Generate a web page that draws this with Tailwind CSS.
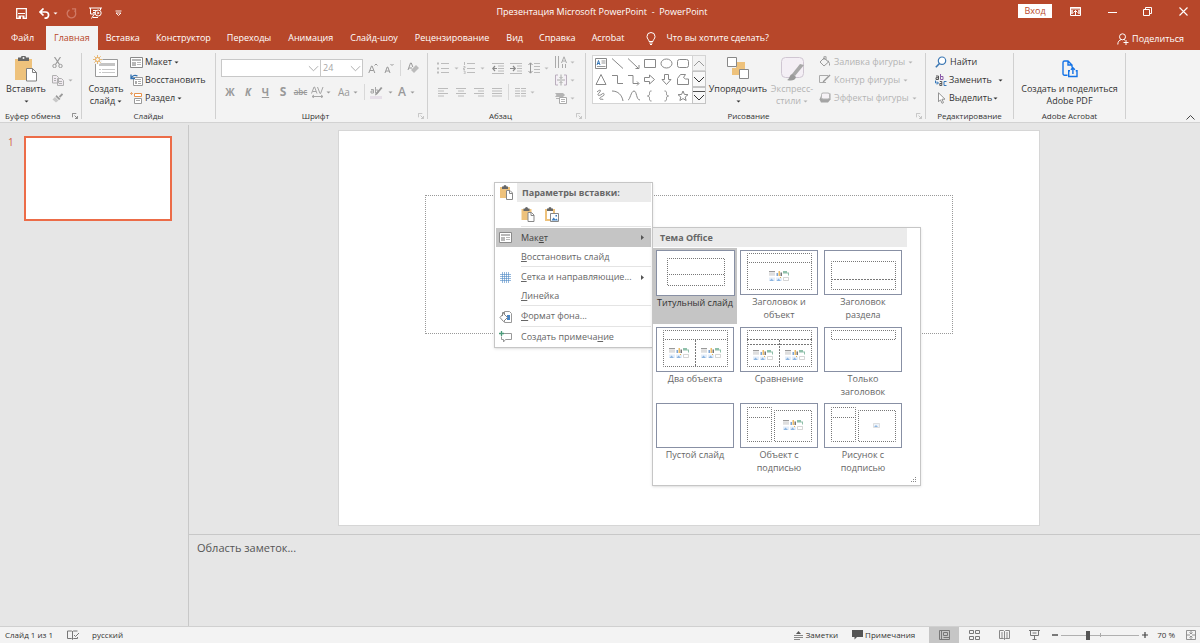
<!DOCTYPE html>
<html lang="ru">
    <head>
        <meta charset="utf-8">
        <title>Презентация Microsoft PowerPoint - PowerPoint</title>
        <script src="https://cdn.jsdelivr.net/npm/@tailwindcss/browser@4"></script>
    </head>

    <body class="h-screen flex flex-col overflow-hidden bg-[#e6e6e6] font-['Open_Sans',sans-serif] text-[9px] leading-[12px] text-[#333]">

        <!-- icon sprites -->
        <svg class="hidden">
            <symbol id="caret" viewBox="0 0 5 3"><path d="M.5 .5h4l-2 2z" fill="currentColor"/></symbol>
            <symbol id="chevron" viewBox="0 0 12 7"><path d="M1 1l5 5 5-5" fill="none" stroke="currentColor"/></symbol>
            <symbol id="launcher" viewBox="0 0 7 7"><path d="M.5 5V.5H5M3 3l3 3M6.500 3.500v3h-3" fill="none" stroke="currentColor"/></symbol>
            <symbol id="paste" viewBox="0 0 24 26">
                <path d="M1 3h17v21H1z" fill="#eec27c"/><path d="M4 1.500h3a2.500 2 0 015 0h3V5H4z" fill="#666"/><circle cx="9.500" cy="2" r="1" fill="#f3f3f3"/>
                <path d="M12.500 12.500h6l4 4V25h-10z" fill="#fff" stroke="#808080"/><path d="M18.500 12.500v4h4" fill="none" stroke="#808080"/>
            </symbol>
            <symbol id="paste-small" viewBox="0 0 13 15">
                <path d="M0 2h10v11H0z" fill="#eec27c"/><path d="M2 1.500h1.500a1.500 1.500 0 013 0H8V4H2z" fill="#666"/>
                <path d="M6.500 5.500h3.500l2.500 2.500v6.500h-6z" fill="#fff" stroke="#888"/><path d="M9.500 5.500v3h3" fill="none" stroke="#888"/>
            </symbol>
            <symbol id="paste-pic" viewBox="0 0 14 15">
                <path d="M1 3h8v10H1z" fill="#fff" stroke="#eec27c" stroke-width="2"/><path d="M2 1.500h1.500a1.500 1.500 0 013 0H8V4H2z" fill="#666"/>
                <path d="M5.500 6.500h8v8h-8z" fill="#fff" stroke="#888"/><path d="M6.500 13.500l2-3 2 2 1-1 1.500 2z" fill="#3f7fbf"/><path d="M10.500 8h1.500v1.500h-1.500z" fill="#3f7fbf"/>
            </symbol>
            <symbol id="layout" viewBox="0 0 13 11">
                <path d="M.5 .5h12v10H.5z" fill="#fff" stroke="#8a8a8a"/><path d="M2 2h9v2H2zM2 5h4v4H2zM7 5h4v1H7zM7 7h4v1H7z" fill="#b8b8b8"/>
            </symbol>
            <!-- tiny set of content placeholders inside a layout preview -->
            <symbol id="content" viewBox="0 0 20 10">
                <path d="M0 0h6v5H0z" fill="#e6e6e6"/><path d="M0 0h6v1H0z" fill="#999"/><path d="M0 3h6" stroke="#c4c4c4" stroke-width=".5"/>
                <path d="M7.500 2h1.500v3H7.500z" fill="#7ba3d4"/><path d="M9.500 0H11v5H9.500z" fill="#ecbc66"/><path d="M11.500 1.500H13v3.500h-1.500z" fill="#777"/>
                <path d="M14 0h4v1.500h2v3h-1V2.500h-5z" fill="#8fc0aa"/>
                <path d="M0 6.500h6V10H0zM7 6.500h6V10H7z" fill="#e4eefa"/><path d="M.5 10l2-2.500 2.500 2.500zM7.500 10l2-2.500 2.500 2.500z" fill="#8db5e0"/>
                <path d="M14.500 6.500h5v3h-5z" fill="#fff" stroke="#bbb" stroke-width=".6"/><path d="M11 6h1v1h-1z" fill="#e8b04c"/>
            </symbol>
            <symbol id="slide-new" viewBox="0 0 26 23">
                <path d="M2.500 4.500h22v17h-22z" fill="#fff" stroke="#999"/><path d="M6 8h16v3H6z" fill="#c4c4c4"/><path d="M6 14.500h2M9 14.500h13M6 17.500h2M9 17.500h13" stroke="#c8c8c8"/>
                <circle cx="4.500" cy="4.500" r="5" fill="#f3f3f3"/><path d="M4.500 0v9M0 4.500h9M1.300 1.300l6.400 6.400M7.700 1.300l-6.400 6.400" stroke="#e8b874"/><circle cx="4.500" cy="4.500" r="2" fill="#f3f3f3" stroke="#e8a851"/>
            </symbol>
        </svg>

        <!-- title bar -->
        <header class="bg-[#b7472a] text-white">
            <div class="flex h-[26px] items-center">
                <div class="flex flex-1 items-center pl-4">
                    <button type="button" aria-label="Сохранить"><svg class="size-[11px]" viewBox="0 0 11 11"><path d="M.7 .7h9.600v9.600H.7z" fill="none" stroke="#fff" stroke-width="1.300"/><path d="M2 5.500h7" stroke="#fff"/><path d="M2.500 7.500h6V11h-6z" fill="#fff"/><path d="M5 8.500h1.500V11H5z" fill="#b7472a"/></svg></button>
                    <button type="button" aria-label="Отменить" class="ml-3 flex items-center gap-[3px]"><svg class="h-[11px] w-[11px]" viewBox="0 0 11 11"><path d="M4.500 .5L1 4l3.500 3.500M1 4h5.500a3 3 0 010 6.200H5.500" fill="none" stroke="#fff" stroke-width="1.700"/></svg><svg class="h-[3px] w-[5px]"><use href="#caret"/></svg></button>
                    <button type="button" aria-label="Повторить" disabled class="ml-2 text-[#d07a66]"><svg class="size-[11px]" viewBox="0 0 11 11"><path d="M3.500 1.800a4.300 4.300 0 105 .8M6 .8h3.500v3.400" fill="none" stroke="currentColor" stroke-width="1.300"/></svg></button>
                    <button type="button" aria-label="С начала" class="ml-3"><svg class="h-3 w-[13px]" viewBox="0 0 13 12"><path d="M0 1h13M1.500 1v6h5M11.500 1v2M4 3.500h3M4 5.500h2M5 7.500l-2.500 4M4 10.500h5" fill="none" stroke="#fff"/><circle cx="9.200" cy="6" r="3" fill="none" stroke="#fff"/><path d="M8.400 4.500l2.300 1.500-2.300 1.500z" fill="#fff"/></svg></button>
                    <button type="button" aria-label="Настройка панели" class="ml-[13px]"><svg class="size-[7px]" viewBox="0 0 7 7"><path d="M.5 1h6M1 3h5L3.500 5.500z" fill="none" stroke="#fff" stroke-width=".9"/></svg></button>
                </div>
                <h1 class="whitespace-pre pb-[3px]">Презентация Microsoft PowerPoint  -  PowerPoint</h1>
                <div class="flex flex-1 items-center justify-end pr-3 pb-1">
                    <button type="button" class="h-[14px] w-[34px] bg-white text-[#b7472a]">Вход</button>
                    <button type="button" aria-label="Параметры ленты" class="ml-[18px]"><svg class="h-[9px] w-[11px]" viewBox="0 0 11 9"><path d="M.5 .5h10v8H.5z" fill="none" stroke="#fff"/><path d="M0 0h11v2.500H0zM1 3h2v4H1zM8 3h2v4H8z" fill="#fff" fill-opacity=".7"/><path d="M5.500 8V3.500M3.500 5.500l2-2 2 2" fill="none" stroke="#fff"/></svg></button>
                    <button type="button" aria-label="Свернуть" class="ml-[27px]"><svg class="h-[9px] w-[9px]" viewBox="0 0 9 9"><path d="M0 5.500h9" stroke="#fff"/></svg></button>
                    <button type="button" aria-label="Восстановить окно" class="ml-[26px]"><svg class="size-[9px]" viewBox="0 0 9 9"><path d="M.5 2.500h6v6h-6zM2.500 2V.5h6v6H7" fill="none" stroke="#fff"/></svg></button>
                    <button type="button" aria-label="Закрыть" class="ml-[27px]"><svg class="size-[9px]" viewBox="0 0 9 9"><path d="M.5 .5l8 8M8.500 .5l-8 8" stroke="#fff" stroke-width="1.100"/></svg></button>
                </div>
            </div>

            <!-- ribbon tabs -->
            <nav class="flex h-6 items-stretch">
                <a href="#" class="flex w-[46px] items-center pl-[11px]">Файл</a>
                <a href="#" class="flex items-center bg-[#f3f3f3] px-2 text-[#b7472a]">Главная</a>
                <a href="#" class="flex items-center px-2">Вставка</a>
                <a href="#" class="flex items-center px-2">Конструктор</a>
                <a href="#" class="flex items-center px-2">Переходы</a>
                <a href="#" class="flex items-center pr-2 pl-[9px]">Анимация</a>
                <a href="#" class="flex items-center pr-2 pl-[9px]">Слайд-шоу</a>
                <a href="#" class="flex items-center pr-2 pl-[9px]">Рецензирование</a>
                <a href="#" class="flex items-center pr-2 pl-[9px]">Вид</a>
                <a href="#" class="flex items-center px-2">Справка</a>
                <a href="#" class="flex items-center px-2">Acrobat</a>
                <button type="button" class="ml-[14px] flex items-center gap-[10px]"><svg class="h-[13px] w-[10px]" viewBox="0 0 10 13"><path d="M3 9.500C3 7.500 1 7 1 4.500a4 4 0 018 0C9 7 7 7.500 7 9.500zM3.300 11h3.400M4 12.500h2" fill="none" stroke="#fff"/></svg>Что вы хотите сделать?</button>
                <button type="button" class="ml-auto flex items-center gap-[3px] pt-[2px] pr-4"><svg class="size-3" viewBox="0 0 12 12"><circle cx="5.500" cy="3.800" r="3" fill="none" stroke="#fff"/><path d="M.8 11.500c0-3 1.500-4.300 3.400-4.900M7 6.600l1 .5M9 7v5M6.500 9.500h5" fill="none" stroke="#fff"/></svg>Поделиться</button>
            </nav>
        </header>

        <!-- ribbon -->
        <div class="flex h-[73px] shrink-0 border-b border-[#d2d2d2] bg-[#f3f3f3] pt-[3px]">

            <section class="mb-[3px] flex w-[82px] shrink-0 flex-col border-r border-[#d0d0d0]">
                <div class="flex h-[54px] shrink-0">
                    <button type="button" class="flex w-[52px] flex-col items-center pt-[3px]"><svg class="h-[26px] w-6"><use href="#paste"/></svg><span class="mt-[1px]">Вставить</span><svg class="mt-[5px] h-[3px] w-[5px]"><use href="#caret"/></svg></button>
                    <div class="flex flex-col text-[#b0b0b0]">
                        <button type="button" aria-label="Вырезать" class="flex h-[18px] items-center"><svg class="size-[11px]" viewBox="0 0 11 11"><path d="M2.500 0l5 7.500M8.500 0l-5 7.500" stroke="#999" stroke-width="1.200"/><circle cx="2.500" cy="9" r="1.700" fill="none" stroke="#999"/><circle cx="8.500" cy="9" r="1.700" fill="none" stroke="#999"/></svg></button>
                        <button type="button" aria-label="Копировать" class="flex h-[18px] items-center gap-[4px]"><svg class="h-[11px] w-[12px]" viewBox="0 0 12 11"><path d="M.5 .5h4l2 2v5.500h-6zM5.500 3.500h4l2 2v5h-6z" fill="#f0eaf0" stroke="currentColor"/><path d="M2 3.500h2M2 5.500h2M7 6.500h3M7 8.500h3" stroke="currentColor"/></svg><svg class="h-[3px] w-[5px]"><use href="#caret"/></svg></button>
                        <button type="button" aria-label="Формат по образцу" class="flex h-[18px] items-center"><svg class="h-[10px] w-[11px]" viewBox="0 0 11 10"><path d="M10.500 1L7.500 4" stroke="#999" stroke-width="1.800"/><path d="M4.500 2l4 4-1.500 1-3.500-3.500z" fill="#999"/><path d="M3 4L.5 6.500 4 9.500 6.500 7.500z" fill="#c8c8c8"/></svg></button>
                    </div>
                </div>
                <div class="flex items-center justify-between pt-[3px] pr-[3px] pl-[5px] text-[8px]"><span class="whitespace-nowrap">Буфер обмена</span><svg class="size-[6px] text-[#777]"><use href="#launcher"/></svg></div>
            </section>

            <section class="mb-[3px] flex w-[134px] shrink-0 flex-col border-r border-[#d0d0d0]">
                <div class="flex h-[54px] shrink-0">
                    <button type="button" class="flex w-[48px] flex-col items-center pt-[2px]"><svg class="h-[23px] w-[26px]"><use href="#slide-new"/></svg><span class="mt-[5px]">Создать</span><span class="flex items-center gap-[2px]">слайд <svg class="h-[3px] w-[5px]"><use href="#caret"/></svg></span></button>
                    <div class="flex flex-col">
                        <button type="button" class="flex h-[18px] items-center gap-[2px]"><svg class="h-[11px] w-[13px]"><use href="#layout"/></svg>Макет<svg class="h-[3px] w-[5px]"><use href="#caret"/></svg></button>
                        <button type="button" class="flex h-[18px] items-center gap-[2px]"><svg class="h-[12px] w-[13px]" viewBox="0 0 13 12"><path d="M3.500 3.500h9v8h-9z" fill="#fff" stroke="#999"/><path d="M5 5h6v1H5zM5 7h2v3H5zM8 7h3v1H8zM8 9h3v1H8z" fill="#aaa"/><path d="M1 .5v4h4M1.500 4c1-2.500 3.500-3.500 6-2" fill="none" stroke="#2f6fb0" stroke-width="1.300"/></svg>Восстановить</button>
                        <button type="button" class="flex h-[18px] items-center gap-[2px]"><svg class="h-[12px] w-[13px]" viewBox="0 0 13 12"><path d="M4.500 1.500h7v3h-7z" fill="#fff" stroke="#e8924b"/><path d="M4.500 6.500h7v5h-7z" fill="#fff" stroke="#999"/><path d="M6 8.500h4" stroke="#aaa"/><path d="M1.500 0v3M0 1.500h3" stroke="#e8a871"/></svg>Раздел<svg class="h-[3px] w-[5px]"><use href="#caret"/></svg></button>
                    </div>
                </div>
                <div class="pt-[3px] text-center text-[8px]">Слайды</div>
            </section>

            <section class="mb-[3px] flex w-[212px] shrink-0 flex-col border-r border-[#d0d0d0]">
                <div class="flex h-[54px] shrink-0 flex-col pl-[5px] text-[#a6a6a6]">
                    <div class="mt-[6px] flex h-[18px] items-center">
                        <div class="relative"><select aria-label="Шрифт" class="block h-[18px] w-[100px] appearance-none border border-[#c8c8c8] bg-white"><option></option></select><svg class="pointer-events-none absolute top-[6px] right-[2px] h-[7px] w-[11px]"><use href="#chevron"/></svg></div>
                        <div class="relative"><select aria-label="Размер шрифта" class="block h-[18px] w-[42px] appearance-none border border-l-0 border-[#c8c8c8] bg-white pl-[2px]"><option>24</option></select><svg class="pointer-events-none absolute top-[6px] right-[2px] h-[7px] w-[11px]"><use href="#chevron"/></svg></div>
                        <button type="button" aria-label="Увеличить размер" class="ml-[2px] flex w-4 justify-center"><svg class="h-[12px] w-[10px]" viewBox="0 0 10 12"><path d="M.8 11l2.700-7h.6L6.800 11M2 8.500h3.600M6.500 3.500L8 2l1.500 1.500" fill="none" stroke="#999"/></svg></button>
                        <button type="button" aria-label="Уменьшить размер" class="flex w-4 justify-center"><svg class="h-[12px] w-[10px]" viewBox="0 0 10 12"><path d="M1 11l2.200-6h.6L6 11M2 9h3M6.500 2L8 3.500 9.500 2" fill="none" stroke="#999"/></svg></button>
                        <span class="ml-[3px] h-4 border-l border-[#d8d8d8]"></span>
                        <button type="button" aria-label="Очистить формат" class="ml-[6px]"><svg class="h-[12px] w-[13px]" viewBox="0 0 13 12"><path d="M1 8l2.500-7h.8l1.500 4M2 6h3" fill="none" stroke="#999"/><path d="M9 3l3 3-5 5-3-3z" fill="#bbb"/></svg></button>
                    </div>
                    <div class="mt-[6px] flex h-[18px] items-center text-[10px] text-[#999]">
                        <button type="button" class="w-[18px] font-bold">Ж</button>
                        <button type="button" class="w-[18px] font-bold italic">К</button>
                        <button type="button" class="w-[17px] font-bold underline">Ч</button>
                        <button type="button" class="w-[18px] text-[12px] font-bold">S</button>
                        <button type="button" class="w-[17px] text-[8px] font-semibold line-through">abc</button>
                        <button type="button" aria-label="Интервал между знаками" class="ml-[2px] flex w-[24px] items-center gap-[2px]"><svg class="h-[12px] w-[13px]" viewBox="0 0 13 12"><path d="M.5 7.500L3 1h.6L6 7.500M1.500 5.500h3.500M6.500 1L9 7.500h.6L12 1M1 10.500h11M3 9l-2 1.500 2 1.500M10 9l2 1.500-2 1.500" fill="none" stroke="#a6a6a6"/></svg><svg class="h-[3px] w-[5px]"><use href="#caret"/></svg></button>
                        <button type="button" class="ml-[3px] flex items-center gap-[3px]">Aa<svg class="h-[3px] w-[5px]"><use href="#caret"/></svg></button>
                        <span class="ml-[6px] h-4 border-l border-[#d8d8d8]"></span>
                        <button type="button" aria-label="Цвет выделения" class="ml-[5px] flex items-center gap-[5px]"><svg class="h-[13px] w-[13px]" viewBox="0 0 13 13"><path d="M0 10h12v3H0z" fill="#e6dfe8"/><path d="M1 3.500h2.500V7H1V5h2.500M5.500 1v6H8V4H5.500" fill="none" stroke="#a6a6a6"/><path d="M12.500 2L7 8.500l-2 1 .5-2L11 1z" fill="#999"/></svg><svg class="h-[3px] w-[5px]"><use href="#caret"/></svg></button>
                        <button type="button" class="ml-[5px] flex items-center gap-[4px] text-[12px] font-semibold">A<svg class="h-[3px] w-[5px]"><use href="#caret"/></svg></button>
                    </div>
                </div>
                <div class="flex items-center pt-[3px] pr-[3px] text-[8px]"><span class="flex-1 pr-[3px] text-center">Шрифт</span><svg class="size-[6px] text-[#bbb]"><use href="#launcher"/></svg></div>
            </section>

            <section class="mb-[3px] flex w-[158px] shrink-0 flex-col border-r border-[#d0d0d0]">
                <div class="flex h-[54px] shrink-0 pl-[9px] text-[#bcbcbc]">
                    <div class="w-[118px]">
                        <div class="mt-[6px] flex h-[18px] items-center">
                            <button type="button" aria-label="Маркеры" class="flex items-center gap-[5px]"><svg class="h-[12px] w-[12px]" viewBox="0 0 12 12"><path d="M4 1.500h8M4 6.500h8M4 10.500h8" stroke="currentColor"/><path d="M0 .5h2v2H0zM0 5.500h2v2H0zM0 9.500h2v2H0z" fill="currentColor"/></svg><svg class="h-[3px] w-[5px]"><use href="#caret"/></svg></button>
                            <button type="button" aria-label="Нумерация" class="ml-1 flex items-center gap-[5px]"><svg class="h-[12px] w-[12px]" viewBox="0 0 12 12"><path d="M4 1.500h8M4 6.500h8M4 10.500h8M1.500 0v3M.5 4.500h1.500V6H.5v1.500H2M.5 9h1.500v3H.5" fill="none" stroke="currentColor"/></svg><svg class="h-[3px] w-[5px]"><use href="#caret"/></svg></button>
                            <button type="button" aria-label="Уменьшить отступ" class="ml-[7px]"><svg class="h-[11px] w-[12px]" viewBox="0 0 12 11"><path d="M0 .5h12M6 3h6M6 5.500h6M6 8h6M0 10.500h12" stroke="currentColor"/><path d="M5 5.500H.8M3 3L.8 5.500 3 8" fill="none" stroke="#8a8a8a" stroke-width="1.200"/></svg></button>
                            <button type="button" aria-label="Увеличить отступ" class="ml-[6px]"><svg class="h-[11px] w-[12px]" viewBox="0 0 12 11"><path d="M0 .5h12M7 3h5M7 5.500h5M7 8h5M0 10.500h12" stroke="currentColor"/><path d="M0 5.500h5M3 3l2.300 2.500L3 8" fill="none" stroke="#8a8a8a" stroke-width="1.200"/></svg></button>
                            <button type="button" aria-label="Интервал" class="ml-[6px] flex items-center gap-[4px]"><svg class="h-[12px] w-[12px]" viewBox="0 0 12 12"><path d="M6 1.500h6M6 4.500h6M6 7.500h6M6 10.500h6" stroke="currentColor"/><path d="M2.500 1v10M.5 3l2-2.200 2 2.200M.5 9l2 2.200 2-2.200" fill="none" stroke="#999"/></svg><svg class="h-[3px] w-[5px]"><use href="#caret"/></svg></button>
                        </div>
                        <div class="mt-[6px] flex h-[18px] items-center gap-[8px] pl-px">
                            <button type="button" aria-label="По левому краю"><svg class="h-[9px] w-[10px]" viewBox="0 0 10 9"><path d="M0 .5h10M0 3h6M0 5.500h10M0 8h6" stroke="currentColor"/></svg></button>
                            <button type="button" aria-label="По центру"><svg class="h-[9px] w-[10px]" viewBox="0 0 10 9"><path d="M0 .5h10M2 3h6M0 5.500h10M2 8h6" stroke="currentColor"/></svg></button>
                            <button type="button" aria-label="По правому краю"><svg class="h-[9px] w-[10px]" viewBox="0 0 10 9"><path d="M0 .5h10M4 3h6M0 5.500h10M4 8h6" stroke="currentColor"/></svg></button>
                            <button type="button" aria-label="По ширине"><svg class="h-[9px] w-[10px]" viewBox="0 0 10 9"><path d="M0 .5h10M0 3h10M0 5.500h10M0 8h10" stroke="currentColor"/></svg></button>
                            <span class="-mx-[2px] h-4 border-l border-[#d8d8d8]"></span>
                            <button type="button" aria-label="Колонки" class="flex items-center gap-[4px]"><svg class="h-[9px] w-[11px]" viewBox="0 0 11 9"><path d="M0 .5h5M0 3h5M0 5.500h5M0 8h5M6 .5h5M6 3h5M6 5.500h5M6 8h5" stroke="currentColor"/></svg><svg class="h-[3px] w-[5px]"><use href="#caret"/></svg></button>
                        </div>
                    </div>
                    <div>
                        <button type="button" aria-label="Направление текста" class="flex h-[18px] items-center gap-[3px]"><svg class="size-[12px]" viewBox="0 0 12 12"><path d="M.5 0v12M3.500 0v12M7.500 8v4M10.500 8v4M6.500 7L9 .8 11.500 7M7.500 5h3" fill="none" stroke="#aaa"/></svg><svg class="h-[3px] w-[5px]"><use href="#caret"/></svg></button>
                        <button type="button" aria-label="Выровнять текст" class="flex h-[18px] items-center gap-[3px]"><svg class="size-[12px]" viewBox="0 0 12 12"><path d="M3 1H.5v10H3M9 1h2.500v10H9" fill="#f4eef6" stroke="#b9aebc"/><path d="M2 6h8M6 .5v4M6 7.500v4M4.500 3L6 4.500 7.500 3M4.500 9L6 7.500 7.500 9" fill="none" stroke="#aaa"/></svg><svg class="h-[3px] w-[5px]"><use href="#caret"/></svg></button>
                        <button type="button" aria-label="Преобразовать в SmartArt" class="flex h-[18px] items-center gap-[3px]"><svg class="size-[12px]" viewBox="0 0 12 12"><path d="M0 1h8l2 2-2 2H0l1.500-2z" fill="#b4b4b4"/><path d="M4.500 5.500h7v6h-7z" fill="#fff" stroke="#aaa"/><path d="M6 7.500h4M6 9.500h4M1 6.500h3" stroke="#b4b4b4"/></svg><svg class="h-[3px] w-[5px]"><use href="#caret"/></svg></button>
                    </div>
                </div>
                <div class="flex items-center pt-[3px] pr-[3px] text-[8px]"><span class="flex-1 pr-[3px] text-center">Абзац</span><svg class="size-[6px] text-[#bbb]"><use href="#launcher"/></svg></div>
            </section>

            <section class="mb-[3px] flex w-[340px] shrink-0 flex-col border-r border-[#d0d0d0]">
                <div class="flex h-[54px] shrink-0 pl-[6px]">
                    <!-- shape gallery -->
                    <div class="mt-[2px] flex h-[49px] w-[114px] border border-[#d4d4d4] bg-white">
                        <svg class="h-[47px] w-[99px]" viewBox="0 0 99 47" fill="none" stroke="#888">
                            <path d="M2.500 2.500h11v10h-11z"/><path d="M4 9l1.500-4.500L7 9M4.500 7.500h2" stroke="#3577b8"/><path d="M8.500 5h4M8.500 7h4M4 10.500h8.500" stroke="#999"/>
                            <path d="M19 2.500l11 10M35 2.500l10 9.500M46 9v3.500h-3.500"/>
                            <path d="M51.500 3.500h11v8h-11z"/><ellipse cx="73.500" cy="7.500" rx="5.500" ry="4.500"/><rect x="84.500" y="3.500" width="11" height="8" rx="2"/>
                            <path d="M8 18.500l5 10H3z"/><path d="M19 19.500h5.500v8h5.500M35 19.500h5v8h5.500M44 25.500l2 2-2 2"/>
                            <path d="M51.500 21.500h5v-2.500l5 4.500-5 4.500v-2.500h-5z"/><path d="M71.500 18.500h4v5h2.500l-4.500 5-4.500-5h2.500z"/><path d="M84.500 28.500v-6l3-4h5l-2 3 2 1.500h3v5.500z"/>
                            <path d="M4 36c3-3 5-2 2 1s1 3 3 1 3 1 1 2-4 2-3 3 3-1 3 1"/><path d="M19 35c6 0 10 4 11 10"/><path d="M35 44c2 0 3-9 6-9s2 9 6 9"/>
                            <path d="M58.500 35c-2 0-2 1-2 2.500s0 2-2 2.500c2 .5 2 1 2 2.500s0 2.500 2 2.500M71.500 35c2 0 2 1 2 2.500s0 2 2 2.500c-2 .5-2 1-2 2.500s0 2.500-2 2.500"/>
                            <path d="M90 35l1.400 3.400 3.600.3-2.800 2.300.9 3.500L90 42.600l-3.100 1.900.9-3.500L85 38.700l3.600-.3z"/>
                        </svg>
                        <div class="-my-px -mr-px flex w-[14px] flex-col text-[#333]">
                            <button type="button" aria-label="Вверх" class="flex h-4 items-center justify-center border border-[#d4d4d4] bg-[#f3f3f3] text-[#999]"><svg class="h-[7px] w-3 rotate-180"><use href="#chevron"/></svg></button>
                            <button type="button" aria-label="Вниз" class="flex h-4 items-center justify-center border border-[#c4c4c4] bg-[#f8f8f8]"><svg class="h-[7px] w-3"><use href="#chevron"/></svg></button>
                            <button type="button" aria-label="Ещё" class="flex flex-1 flex-col items-center justify-center gap-[2px] border border-[#c4c4c4] bg-[#f8f8f8]"><span class="w-3 border-t border-[#555]"></span><svg class="h-[7px] w-3"><use href="#chevron"/></svg></button>
                        </div>
                    </div>
                    <button type="button" class="flex w-[64px] flex-col items-center pt-[3px]"><svg class="h-[24px] w-[24px]" viewBox="0 0 24 24"><path d="M10 6h9v9h-4v4H6v-7h4z" fill="#eec27c"/><path d="M1.500 1.500h9v9h-9zM13.500 13.500h9v9h-9z" fill="#fff" stroke="#888"/></svg><span class="mt-[3px]">Упорядочить</span><svg class="mt-[5px] h-[3px] w-[5px]"><use href="#caret"/></svg></button>
                    <button type="button" class="flex w-[44px] flex-col items-center pt-[3px] text-[#b4b4b4]"><svg class="h-[26px] w-[25px]" viewBox="0 0 25 26"><rect x="1.500" y="1.500" width="22" height="20" rx="4" fill="#f4eff5" stroke="#cfc6d2"/><path d="M24 9l-9 11-3-2 8-10z" fill="#a8a8a8"/><path d="M13 18l3 3c-1 4-5 4-9 3 3-1 2-6 6-6z" fill="#9a9a9a"/></svg><span class="mt-[1px]">Экспресс-</span><span class="flex items-center gap-[2px]">стили <svg class="h-[3px] w-[5px]"><use href="#caret"/></svg></span></button>
                    <div class="ml-[5px] text-[#b4b4b4]">
                        <button type="button" class="flex h-[18px] items-center gap-[3px]"><svg class="size-[12px]" viewBox="0 0 12 12"><path d="M5 2L1 6l4 4 4.500-4zM5 4V1a1 1 0 012 0v3M9 4.500l1.500 3v2" fill="none" stroke="#999"/></svg>Заливка фигуры<svg class="h-[3px] w-[5px]"><use href="#caret"/></svg></button>
                        <button type="button" class="flex h-[18px] items-center gap-[3px]"><svg class="size-[12px]" viewBox="0 0 12 12"><path d="M9 1.500H.5v7H7" fill="none" stroke="#aaa"/><path d="M11.500 1.500L5 8l-1.500.5.5-1.500L10.500.5z" fill="#999"/></svg>Контур фигуры<svg class="h-[3px] w-[5px]"><use href="#caret"/></svg></button>
                        <button type="button" class="flex h-[18px] items-center gap-[3px]"><svg class="size-[12px]" viewBox="0 0 12 12"><path d="M3 1.500h8.500v6L9 10.500H2L.5 7.500z" fill="#a4a4a4"/><rect x="2.500" y="1" width="8" height="6" rx="1.500" fill="#f6f2f6" stroke="#b4b4b4"/></svg>Эффекты фигуры<svg class="h-[3px] w-[5px]"><use href="#caret"/></svg></button>
                    </div>
                </div>
                <div class="flex items-center pt-[3px] pr-[3px] text-[8px]"><span class="flex-1 pr-[5px] text-center">Рисование</span><svg class="size-[6px] text-[#bbb]"><use href="#launcher"/></svg></div>
            </section>

            <section class="mb-[3px] flex w-[88px] shrink-0 flex-col border-r border-[#d0d0d0]">
                <div class="h-[54px] shrink-0 pl-[9px]">
                    <button type="button" class="flex h-[18px] items-center gap-[3px]"><svg class="size-[12px]" viewBox="0 0 12 12"><circle cx="7" cy="4.700" r="3.700" fill="#fff" stroke="#3c78b4" stroke-width="1.200"/><path d="M4.500 7.500L.8 11.200" stroke="#3c78b4" stroke-width="1.600"/></svg>Найти</button>
                    <button type="button" class="flex h-[18px] items-center gap-[2px]"><svg class="size-[12px]" viewBox="0 0 12 12" fill="none"><path d="M1 2h2.500v3.500H1V3.700h2.500" stroke="#555"/><path d="M5.500 0v5.500H8V2.500H5.500" stroke="#8a5aa8"/><path d="M.5 6.500v2.500H3M2 7.500L3.500 9 2 10.500" stroke="#3577b8"/><path d="M4.800 7.500h2v4h-2V9.500h2" stroke="#555"/><path d="M11.500 7.500H9v4h2.500" stroke="#3577b8"/></svg>Заменить<svg class="ml-1 h-[3px] w-[5px]"><use href="#caret"/></svg></button>
                    <button type="button" class="flex h-[18px] items-center gap-[2px]"><svg class="size-[12px]" viewBox="0 0 12 12"><path d="M3.500 .8v9l2-2 1.500 3.500 1.500-.7L7 7.200h3z" fill="#fff" stroke="#888" stroke-width=".9"/></svg>Выделить<svg class="-ml-[1px] h-[3px] w-[5px]"><use href="#caret"/></svg></button>
                </div>
                <div class="pt-[3px] text-center text-[8px]">Редактирование</div>
            </section>

            <section class="mb-[3px] flex w-[112px] shrink-0 flex-col border-r border-[#d0d0d0]">
                <button type="button" class="flex h-[54px] shrink-0 flex-col items-center pt-[7px]"><svg class="h-[18px] w-4" viewBox="0 0 16 18" fill="none" stroke="#1473e6" stroke-width="1.400"><path d="M5.500 15.300H2.500A1.500 1.500 0 011 13.800V2.500A1.500 1.500 0 012.500 1H6l4 4v2.500M6 1v4h4M8 10.800H6.700v5.700h8.300v-5.700h-1.300M10.900 14V8M8.900 9.800l2-2 2 2"/></svg><span class="mt-[5px] whitespace-nowrap">Создать и поделиться</span><span>Adobe PDF</span></button>
                <div class="pt-[3px] text-center text-[8px]">Adobe Acrobat</div>
            </section>

            <button type="button" aria-label="Свернуть ленту" class="mt-auto mr-[5px] mb-[2px] ml-auto"><svg class="h-[5px] w-[9px]" viewBox="0 0 9 5"><path d="M.5 4.500l4-4 4 4" fill="none" stroke="#444"/></svg></button>
        </div>

        <main class="flex min-h-0 flex-1">
            <!-- slide thumbnails -->
            <aside class="mt-[2px] flex w-[189px] shrink-0 items-start border-r border-[#c8c8c8] pt-[11px]">
                <span class="w-6 pl-[8px] text-[10px] text-[#d2603f]">1</span>
                <a href="#" aria-label="Слайд 1" class="h-[85px] w-[148px] border-2 border-[#ec6c48] bg-white"></a>
            </aside>

            <div class="flex flex-1 flex-col">
                <div class="flex flex-1 pt-[7px] pr-[160px] pb-[8px] pl-[149px]">
                    <div class="flex-1 border border-[#d6d6d6] bg-white px-[86px] pt-[64px]">
                        <div class="h-[139px] border border-dotted border-[#999]"></div>
                    </div>
                </div>
                <div class="h-[92px] border-t border-[#c8c8c8] px-2 pt-[6px] text-[11px] leading-[14px] text-[#555]">Область заметок...</div>
            </div>
        </main>

        <!-- context menu -->
        <div role="menu" class="absolute top-[182px] left-[494px] w-[159px] border border-[#c6c6c6] bg-white px-px text-[#666] shadow-sm">
            <div class="flex h-[19px] items-center"><svg class="mr-[4px] ml-[4px] h-[15px] w-[13px]"><use href="#paste-small"/></svg><span class="flex h-full flex-1 items-center bg-[#ebebeb] pl-[5px] font-bold">Параметры вставки:</span></div>
            <div class="ml-[25px] flex h-[25px] items-center gap-[10px] border-b border-[#e4e4e4]">
                <button type="button" aria-label="Использовать конечную тему"><svg class="h-[15px] w-[14px]"><use href="#paste-small"/></svg></button>
                <button type="button" aria-label="Рисунок"><svg class="h-[15px] w-[14px]"><use href="#paste-pic"/></svg></button>
            </div>
            <button type="button" class="mt-px flex h-[19px] w-full items-center bg-[#c5c5c5] pr-[7px] pl-[3px] text-[#444]"><svg class="mr-[9px] h-[11px] w-[13px]"><use href="#layout"/></svg><span>Мак<u>е</u>т</span><svg class="ml-auto h-[5px] w-[3px]" viewBox="0 0 3 5"><path d="M0 0l3 2.500L0 5z" fill="#555"/></svg></button>
            <button type="button" class="ml-[25px] flex h-[20px] w-[130px] items-center border-b border-[#e4e4e4]"><span><u>В</u>осстановить слайд</span></button>
            <div class="flex h-5 items-center pr-[7px] pl-1"><svg class="mr-[10px] size-[11px]" viewBox="0 0 11 11"><path d="M2.500 0v11M4.500 0v11M6.500 0v11M8.500 0v11M0 2.500h11M0 4.500h11M0 6.500h11M0 8.500h11" stroke="#4f88c4" stroke-opacity=".6"/></svg><button type="button" class="whitespace-nowrap"><u>С</u>етка и направляющие...</button><svg class="ml-auto h-[5px] w-[3px]" viewBox="0 0 3 5"><path d="M0 0l3 2.500L0 5z" fill="#555"/></svg></div>
            <button type="button" class="ml-[25px] flex h-[19px] w-[130px] items-center border-b border-[#e4e4e4]"><span><u>Л</u>инейка</span></button>
            <button type="button" class="flex h-[21px] w-full items-center pl-[3px]"><svg class="h-3 w-[13px]" viewBox="0 0 13 12"><path d="M5.500 .5h5l2 2v9h-7z" fill="#fff" stroke="#999"/><path d="M8 4h3v5H8z" fill="#4a86c5"/><path d="M4.500 2.500L1 6.500l3.500 4 4-4zM3.500 5V1.500h2V4" fill="#fff" stroke="#888"/></svg><span class="ml-[9px] flex h-full flex-1 items-center border-b border-[#e4e4e4]"><span><u>Ф</u>ормат фона...</span></span></button>
            <button type="button" class="flex h-5 w-full items-center pl-[3px]"><svg class="h-3 w-[13px]" viewBox="0 0 13 12"><path d="M5 2.500h7.500v6H6.500L4.500 11V8.500H2.500V5.500" fill="none" stroke="#999"/><path d="M2.500 0v5M0 2.500h5" stroke="#4c9b7a" stroke-width="1.300"/></svg><span class="ml-[9px]">Создать примеча<u>н</u>ие</span></button>
        </div>

        <!-- layout gallery -->
        <div role="menu" class="absolute top-[227px] left-[652px] w-[269px] border border-[#c6c6c6] bg-white text-[#666] shadow-sm">
            <h2 class="mr-[13px] mb-px flex h-[19px] items-center bg-[#ebebeb] pl-[7px] font-bold">Тема Office</h2>
            <div class="grid w-[252px] grid-cols-3 leading-[13px]">
                <button type="button" class="flex h-[76px] flex-col items-center bg-[#c5c5c5] pt-[2px] text-[#333]"><svg class="h-[46px] w-[79px] border border-[#8890a4] bg-white" viewBox="0 0 77 44"><path d="M10.500 7.500h57v27h-57zM10.500 23.500h57" fill="none" stroke="#777" stroke-dasharray="1 1" stroke-dashoffset=".5"/></svg>Титульный слайд</button>
                <button type="button" class="flex h-[76px] flex-col items-center pt-[2px]"><svg class="h-[45px] w-[78px] border border-[#8890a4] bg-white" viewBox="0 0 76 43"><path d="M6.500 2.500h64v36h-64zM6.500 11.500h64" fill="none" stroke="#777" stroke-dasharray="1 1" stroke-dashoffset=".5"/><use href="#content" x="28" y="20" width="20" height="10"/></svg><span class="w-[60px]">Заголовок и объект</span></button>
                <button type="button" class="flex h-[76px] flex-col items-center pt-[2px]"><svg class="h-[45px] w-[78px] border border-[#8890a4] bg-white" viewBox="0 0 76 43"><path d="M6.500 10.500h64v28h-64z" fill="none" stroke="#777" stroke-dasharray="1 1" stroke-dashoffset=".5"/><path d="M6 28.500h65" stroke="#777" stroke-dasharray="2 1"/></svg><span class="w-[60px]">Заголовок раздела</span></button>

                <button type="button" class="flex h-[76px] flex-col items-center pt-[3px]"><svg class="h-[45px] w-[78px] border border-[#8890a4] bg-white" viewBox="0 0 76 43"><path d="M6.500 2.500h64v36h-64zM6.500 11.500h64" fill="none" stroke="#777" stroke-dasharray="1 1" stroke-dashoffset=".5"/><path d="M38.500 12v27" stroke="#777" stroke-dasharray="2 1"/><use href="#content" x="12" y="20" width="20" height="10"/><use href="#content" x="44" y="20" width="20" height="10"/></svg>Два объекта</button>
                <button type="button" class="flex h-[76px] flex-col items-center pt-[3px]"><svg class="h-[45px] w-[78px] border border-[#8890a4] bg-white" viewBox="0 0 76 43"><path d="M6.500 2.500h64v36h-64z" fill="none" stroke="#777" stroke-dasharray="1 1" stroke-dashoffset=".5"/><path d="M6 11.500h65M6 16.500h65M38.500 12v27" stroke="#777" stroke-dasharray="2 1"/><use href="#content" x="12" y="22" width="20" height="10"/><use href="#content" x="44" y="22" width="20" height="10"/></svg>Сравнение</button>
                <button type="button" class="flex h-[76px] flex-col items-center pt-[3px]"><svg class="h-[45px] w-[78px] border border-[#8890a4] bg-white" viewBox="0 0 76 43"><path d="M6.500 2.500h64v9h-64z" fill="none" stroke="#777" stroke-dasharray="1 1" stroke-dashoffset=".5"/></svg><span class="w-[60px]">Только заголовок</span></button>

                <button type="button" class="flex h-[76px] flex-col items-center pt-[3px]"><svg class="h-[45px] w-[78px] border border-[#8890a4] bg-white" viewBox="0 0 76 43"></svg>Пустой слайд</button>
                <button type="button" class="flex h-[76px] flex-col items-center pt-[3px]"><svg class="h-[45px] w-[78px] border border-[#8890a4] bg-white" viewBox="0 0 76 43"><path d="M6.500 3.500h24v34h-24zM6.500 13.500h24M33.500 6.500h37v31h-37z" fill="none" stroke="#777" stroke-dasharray="1 1" stroke-dashoffset=".5"/><use href="#content" x="42" y="16" width="20" height="10"/></svg><span class="w-[60px]">Объект с подписью</span></button>
                <button type="button" class="flex h-[76px] flex-col items-center pt-[3px]"><svg class="h-[45px] w-[78px] border border-[#8890a4] bg-white" viewBox="0 0 76 43"><path d="M6.500 3.500h24v34h-24zM6.500 13.500h24M33.500 6.500h37v31h-37z" fill="none" stroke="#777" stroke-dasharray="1 1" stroke-dashoffset=".5"/><path d="M48.500 19.500h6v4h-6z" fill="#eef4fb" stroke="#ccc" stroke-width=".6"/><path d="M49 23l2-2 2 2z" fill="#8db5e0"/></svg><span class="w-[60px]">Рисунок с подписью</span></button>
            </div>
            <svg class="mt-px mr-[3px] mb-[2px] ml-auto size-[6px]" viewBox="0 0 6 6"><path d="M4 0h1v1H4zM4 2h1v1H4zM4 4h1v1H4zM2 2h1v1H2zM2 4h1v1H2zM0 4h1v1H0z" fill="#888"/></svg>
        </div>

        <!-- status bar -->
        <footer class="flex h-[17px] shrink-0 items-center border-t border-[#d0d0d0] bg-[#f3f3f3] pl-[5px] text-[8px]">
            <span>Слайд 1 из 1</span>
            <button type="button" aria-label="Правописание" class="ml-[14px]"><svg class="h-[10px] w-[12px]" viewBox="0 0 12 10"><path d="M5.500 1v8M.5 1h4l1 .8 1-.8h4M.5 1v7.500h4l1 1 1-1h4V7M7 5l1.500 1.500L12 3" fill="none" stroke="#777"/></svg></button>
            <button type="button" class="ml-[13px]">русский</button>
            <div class="ml-auto flex h-full items-center">
                <button type="button" class="flex items-center gap-[3px]"><svg class="h-[9px] w-[9px]" viewBox="0 0 9 9"><path d="M4.500 0l2.500 3H2z" fill="#555"/><path d="M0 4.500h9M0 6.500h9M0 8.500h6" stroke="#888"/></svg>Заметки</button>
                <button type="button" class="ml-[14px] flex items-center gap-[2px]"><svg class="h-[10px] w-[11px]" viewBox="0 0 11 10"><path d="M0 0h11v7H5L2.500 9.500V7H0z" fill="#555"/></svg>Примечания</button>
                <button type="button" aria-label="Обычный" class="ml-[14px] flex h-full w-[30px] items-center justify-center bg-[#c6c6c6]"><svg class="h-[10px] w-[11px]" viewBox="0 0 11 10"><path d="M.5 .5h10v9H.5zM2.500 .5v9M4.500 2.500h4v3h-4zM4.500 7.500h6" fill="none" stroke="#777"/></svg></button>
                <button type="button" aria-label="Сортировщик" class="flex w-[30px] justify-center"><svg class="h-[10px] w-[11px]" viewBox="0 0 11 10"><path d="M.5 .5h4v3h-4zM6.500 .5h4v3h-4zM.5 6.500h4v3h-4zM6.500 6.500h4v3h-4z" fill="none" stroke="#777"/></svg></button>
                <button type="button" aria-label="Чтение" class="flex w-[30px] justify-center"><svg class="h-[10px] w-[11px]" viewBox="0 0 11 10"><path d="M5.500 1.500v8M.5 .5h4l1 1 1-1h4v8h-4l-1 1-1-1h-4zM2 3h2M2 5h2M2 7h2M7 3h2M7 5h2M7 7h2" fill="none" stroke="#888"/></svg></button>
                <button type="button" aria-label="Показ слайдов" class="flex w-[30px] justify-center"><svg class="h-[10px] w-[11px]" viewBox="0 0 11 10"><path d="M0 .5h11M1.500 .5v5h8v-5M3.500 3h4M5.500 5.500v4M3.500 9.500h4" fill="none" stroke="#777"/></svg></button>
                <button type="button" aria-label="Уменьшить" class="ml-[3px]"><svg class="size-[6px]" viewBox="0 0 6 6"><path d="M0 3h6" stroke="#444" stroke-width="1.400"/></svg></button>
                <div class="relative mx-[3px] flex w-[78px] items-center before:absolute before:left-[39px] before:h-1 before:border-l before:border-[#aaa]">
                    <input type="range" aria-label="Масштаб" min="10" max="200" value="75" class="h-[9px] w-full appearance-none bg-linear-to-b from-transparent from-45% via-[#b0b0b0] via-50% to-transparent to-55% [&::-webkit-slider-thumb]:h-[9px] [&::-webkit-slider-thumb]:w-1 [&::-webkit-slider-thumb]:appearance-none [&::-webkit-slider-thumb]:bg-[#555]">
                </div>
                <button type="button" aria-label="Увеличить"><svg class="size-[6px]" viewBox="0 0 6 6"><path d="M0 3h6M3 0v6" stroke="#444" stroke-width="1.200"/></svg></button>
                <span class="ml-[9px]">70 %</span>
                <button type="button" aria-label="Вписать" class="mr-[4px] ml-[11px]"><svg class="size-[10px]" viewBox="0 0 10 10"><path d="M.5 .5h9v9h-9zM5 .5V4M5 6v3.500M.5 5H4M6 5h3.500M3.500 2.500L5 4l1.500-1.500M3.500 7.500L5 6l1.500 1.500" fill="none" stroke="#888" stroke-width=".9"/></svg></button>
            </div>
        </footer>

    </body>
</html>
